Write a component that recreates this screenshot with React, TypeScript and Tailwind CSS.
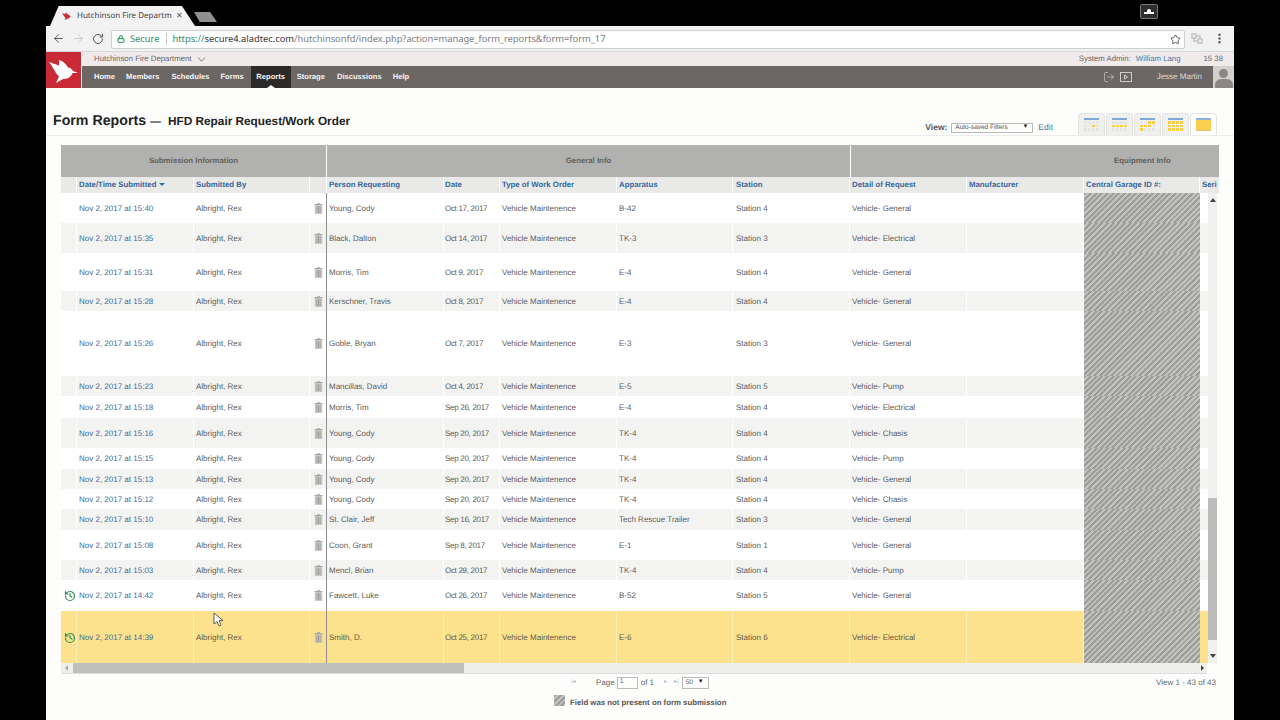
import { ArrowLeft, ArrowRight, RotateCw, Star, Lock, EllipsisVertical, History, ChevronDown, LogOut } from "lucide-react";

const W = ["w-[16px]","w-[117px]","w-[116px]","w-[17px]","w-[117px]","w-[56px]","w-[117px]","w-[116px]","w-[117px]","w-[117px]","w-[117px]","w-[116px]"];

const rows: [string,string,string,string,string,string,string,string][] = [
  ["h-[30px]","Nov 2, 2017 at 15:40","Young, Cody","Oct 17, 2017","B-42","Station 4","Vehicle- General",""],
  ["h-[30px]","Nov 2, 2017 at 15:35","Black, Dalton","Oct 14, 2017","TK-3","Station 3","Vehicle- Electrical",""],
  ["h-[38px]","Nov 2, 2017 at 15:31","Morris, Tim","Oct 9, 2017","E-4","Station 4","Vehicle- General",""],
  ["h-[20px]","Nov 2, 2017 at 15:28","Kerschner, Travis","Oct 8, 2017","E-4","Station 4","Vehicle- General",""],
  ["h-[65px]","Nov 2, 2017 at 15:26","Goble, Bryan","Oct 7, 2017","E-3","Station 3","Vehicle- General",""],
  ["h-[20px]","Nov 2, 2017 at 15:23","Mancillas, David","Oct 4, 2017","E-5","Station 5","Vehicle- Pump",""],
  ["h-[22px]","Nov 2, 2017 at 15:18","Morris, Tim","Sep 26, 2017","E-4","Station 4","Vehicle- Electrical",""],
  ["h-[30px]","Nov 2, 2017 at 15:16","Young, Cody","Sep 20, 2017","TK-4","Station 4","Vehicle- Chasis",""],
  ["h-[21px]","Nov 2, 2017 at 15:15","Young, Cody","Sep 20, 2017","TK-4","Station 4","Vehicle- Pump",""],
  ["h-[20px]","Nov 2, 2017 at 15:13","Young, Cody","Sep 20, 2017","TK-4","Station 4","Vehicle- General",""],
  ["h-[20px]","Nov 2, 2017 at 15:12","Young, Cody","Sep 20, 2017","TK-4","Station 4","Vehicle- Chasis",""],
  ["h-[21px]","Nov 2, 2017 at 15:10","St. Clair, Jeff","Sep 16, 2017","Tech Rescue Trailer","Station 3","Vehicle- General",""],
  ["h-[30px]","Nov 2, 2017 at 15:08","Coon, Grant","Sep 8, 2017","E-1","Station 1","Vehicle- General",""],
  ["h-[20px]","Nov 2, 2017 at 15:03","Mencl, Brian","Oct 29, 2017","TK-4","Station 4","Vehicle- Pump",""],
  ["h-[31px]","Nov 2, 2017 at 14:42","Fawcett, Luke","Oct 26, 2017","B-52","Station 5","Vehicle- General","h"],
  ["h-[52px]","Nov 2, 2017 at 14:39","Smith, D.","Oct 25, 2017","E-6","Station 6","Vehicle- Electrical","h"],
];

const hatch = "bg-[repeating-linear-gradient(135deg,#9d9e9c_0px,#9d9e9c_2px,#c2c3c1_2px,#c2c3c1_4px)]";
const birdPath = "M3 9 L13 12.5 C13.5 10 13 8 13 7 C17 8 20 11 22 14.5 C24 14.5 26 16 27 18 L32 20 L26.5 20 C25 25 20 26 17 26 L10 30 L13 23.5 C10 21 7 14 3 9Z";

function Trash() {
  return (
    <svg width="9" height="11" viewBox="0 0 9 11" fill="none">
      <path d="M0.5 1.5h8" stroke="#a8a8a6" strokeWidth="1" />
      <path d="M3 0.5h3" stroke="#a8a8a6" strokeWidth="0.8" />
      <path d="M1.2 2.4h6.6v8.2H1.2z" fill="#cfcfcd" stroke="#a8a8a6" strokeWidth="0.5" />
      <path d="M2.9 3.2v6.8M4.5 3.2v6.8M6.1 3.2v6.8" stroke="#8f8f8d" strokeWidth="0.8" />
    </svg>
  );
}

function Row({ r, i }: { r: (typeof rows)[number]; i: number }) {
  const yellow = i === rows.length - 1;
  const bg = yellow ? "bg-[#fde28e]" : i % 2 === 1 ? "bg-[#f3f3f2]" : "bg-white";
  const line = yellow ? "border-[#fdeeb8]" : "border-white";
  const txt = yellow ? "text-[#5d5a45]" : "text-[#5c5c5c]";
  const cell = `h-full shrink-0 flex items-center pl-[2px] pt-[1px] border-r ${line}`;
  return (
    <div className={`flex items-center ${r[0]} ${bg} ${txt}`}>
      <div className={`${cell} ${W[0]} !pl-[3px]`}>
        {r[7] === "h" && <History size={12} strokeWidth={2.4} className="text-[#2f8f55]" />}
      </div>
      <div className={`${cell} ${W[1]} text-[#3f6c98]`}>{r[1]}</div>
      <div className={`${cell} ${W[2]}`}>Albright, Rex</div>
      <div className={`h-full shrink-0 flex items-center pl-[4px] border-r border-[#8e8e8e] ${W[3]}`}><Trash /></div>
      <div className={`${cell} ${W[4]}`}>{r[2]}</div>
      <div className={`${cell} ${W[5]} !pl-[1px] tracking-[-0.3px]`}>{r[3]}</div>
      <div className={`${cell} ${W[6]}`}>Vehicle Maintenence</div>
      <div className={`${cell} ${W[7]}`}>{r[4]}</div>
      <div className={`${cell} ${W[8]} !pl-[3px]`}>{r[5]}</div>
      <div className={`${cell} ${W[9]}`}>{r[6]}</div>
      <div className={`${cell} ${W[10]}`}></div>
      <div className={`h-full shrink-0 ${W[11]} ${hatch}`}></div>
      <div className="h-full w-[8px] shrink-0"></div>
    </div>
  );
}

function TabIcon({ kind, active }: { kind: number; active?: boolean }) {
  const cells = [
    [0,0,0,0, 0,0,1,0, 0,0,0,0],
    [0,0,0,0, 1,1,1,1, 0,0,0,0],
    [0,0,1,1, 1,1,1,0, 1,0,0,0],
    [1,1,1,1, 1,1,1,1, 1,1,1,1],
  ][kind] || [];
  return (
    <div className={`h-[22px] w-[27px] flex items-center justify-center border border-b-0 rounded-t-[4px] border-[#e4e4e2] ${active ? "bg-white" : "bg-[#f0f0ee]"}`}>
      {active ? (
        <div className="w-[15px] h-[13px] flex flex-col">
          <div className="h-[2px] bg-[#8fb0d6]" />
          <div className="flex-1 bg-[#f8d24f]" />
          <div className="h-[1px] bg-[#d8c27a]" />
        </div>
      ) : (
        <div className="w-[15px] h-[13px] flex flex-col">
          <div className="h-[2px] bg-[#7ea8d6]" />
          <div className="grid grid-cols-4 gap-[1px] flex-1 pt-[1px]">
            {cells.map((c, i) => <div key={i} className={c ? "bg-[#f8cf45]" : "bg-[#e6e6e4]"} />)}
          </div>
        </div>
      )}
    </div>
  );
}

export default function App() {
  return (
    <div className="w-[1280px] h-[720px] bg-black overflow-hidden relative [text-rendering:geometricPrecision] font-['Liberation_Sans',Arial,sans-serif]">
      {/* tab strip */}
      <div className="h-[26px] pl-[50px] flex items-end relative">
        <div className="h-[20px] w-[145px] bg-[#f2f2f2] [clip-path:polygon(0_100%,6%_0,91%_0,100%_100%)] flex items-center pl-[11px] font-['Noto_Sans',sans-serif] text-[8px] text-[#444]">
          <svg width="12" height="12" viewBox="0 0 35 35" fill="#c62f3a" className="shrink-0"><path d={birdPath} /></svg>
          <span className="ml-[4px] w-[94px] whitespace-nowrap">Hutchinson Fire Departm</span>
          <span className="ml-[5px] text-[8px] text-[#555] leading-none">✕</span>
        </div>
        <div className="w-[23px] h-[10px] mb-[4px] -ml-[1px] bg-[#8f8f8f] [clip-path:polygon(0_0,70%_0,100%_100%,25%_100%)]"></div>
        <div className="absolute left-[1140px] top-[4px] w-[18px] h-[15px] rounded-[2px] bg-[#2e2e2e] border border-[#777] flex flex-col items-center justify-center">
          <div className="w-[4px] h-[3px] bg-white rounded-t-full"></div>
          <div className="w-[10px] h-[2px] bg-white"></div>
        </div>
      </div>

      {/* browser + page */}
      <div className="ml-[46px] w-[1188px] h-[694px] bg-[#fdfdfc] flex flex-col">
        <div className="h-[26px] bg-[#f2f2f2] flex items-center pl-[6px] border-b border-[#d8d8d8] shrink-0">
          <ArrowLeft size={13} strokeWidth={1.8} className="text-[#555]" />
          <ArrowRight size={13} strokeWidth={1.8} className="text-[#c8c8c8] ml-[7px]" />
          <RotateCw size={12} strokeWidth={2} className="text-[#555] ml-[7px]" />
          <div className="ml-[7px] mt-[1px] w-[1074px] h-[19px] bg-white border border-[#cfcfcf] rounded-[2px] flex items-center pl-[5px] font-['Noto_Sans',sans-serif] text-[9.3px] whitespace-nowrap">
            <Lock size={8} strokeWidth={3} className="text-[#1a8a50]" />
            <span className="ml-[5px] text-[#2f8a5c]">Secure</span>
            <span className="ml-[7px] mr-[5px] w-px h-[12px] bg-[#c8c8c8]"></span>
            <span className="text-[#2f8a5c]">https://</span>
            <span className="text-[#333]">secure4.aladtec.com</span>
            <span className="text-[#7c7c7c]">/hutchinsonfd/index.php?action=manage_form_reports&amp;form=form_17</span>
            <Star size={11} strokeWidth={1.8} className="text-[#444] ml-auto mr-[3px]" />
          </div>
          <svg className="ml-[6px]" width="12" height="11" viewBox="0 0 12 11" fill="none" stroke="#c4c4c4" strokeWidth="1.6">
            <path d="M1 1h4v4H1zM7 6h4v4H7zM5 3h4v3M7 8H3V5" />
          </svg>
          <EllipsisVertical size={13} strokeWidth={2.4} className="text-[#555] ml-[10px]" />
        </div>

        {/* app header */}
        <div className="flex h-[36px] shrink-0">
          <div className="w-[35px] h-full bg-[#c92a36] flex items-center justify-center mr-px">
            <svg width="35" height="35" viewBox="0 0 35 35" fill="white"><path d={birdPath} /></svg>
          </div>
          <div className="flex-1 flex flex-col">
            <div className="h-[14px] bg-[#f0eaeb] flex items-center pl-[12px] text-[7.8px] text-[#666]">
              <span>Hutchinson Fire Department</span>
              <ChevronDown size={13} strokeWidth={1.5} className="ml-[3px]" />
              <span className="ml-auto">System Admin:</span>
              <span className="ml-[5px] text-[#49779f]">William Lang</span>
              <span className="ml-[23px] mr-[11px]">15 38</span>
            </div>
            <div className="h-[22px] flex">
              <div className="flex-1 bg-[#6c6665] flex items-center pl-[12px] text-[7.6px] font-bold text-[#f5f5f5] relative">
                <span>Home</span>
                <span className="ml-[11px]">Members</span>
                <span className="ml-[12px]">Schedules</span>
                <span className="ml-[11px]">Forms</span>
                <span className="ml-[7px] bg-[#2c2a28] h-full w-[40px] flex items-center justify-center relative">Reports
                  <span className="absolute bottom-0 left-[16px] w-0 h-0 border-x-[4px] border-x-transparent border-b-[3px] border-b-white"></span>
                </span>
                <span className="ml-[6px]">Storage</span>
                <span className="ml-[12px]">Discussions</span>
                <span className="ml-[11px]">Help</span>
                <LogOut size={12} strokeWidth={1.2} className="ml-auto text-[#d8d8d8]" />
                <svg className="ml-[5px]" width="12" height="10" viewBox="0 0 12 10" fill="none" stroke="#d8d8d8" strokeWidth="0.9">
                  <rect x="0.5" y="0.5" width="11" height="9" />
                  <path d="M4.5 3v4l3-2z" />
                </svg>
                <span className="ml-[25px] mr-[11px] font-normal text-[8px] text-[#ddd]">Jesse Martin</span>
              </div>
              <div className="w-[21px] bg-[#d4d0cf] flex flex-col items-center justify-end overflow-hidden">
                <div className="w-[9px] h-[9px] rounded-full bg-[#8c8786] mb-[1px]"></div>
                <div className="w-[18px] h-[9px] rounded-t-[6px] bg-[#8c8786]"></div>
              </div>
            </div>
          </div>
        </div>

        {/* title */}
        <div className="h-[48px] flex items-end shrink-0 border-b border-[#ececec] pl-[7px] pr-[17px] relative">
          <div className="flex items-baseline self-start mt-[23px] text-[#222] font-bold whitespace-nowrap">
            <span className="text-[14.2px]">Form Reports</span>
            <span className="text-[11px] ml-[4px]">—</span>
            <span className="text-[11.8px] ml-[7px]">HFD Repair Request/Work Order</span>
          </div>
          <div className="ml-auto flex items-center mb-[1px] mr-[25px] text-[#555]">
            <span className="text-[8.5px] font-bold">View:</span>
            <div className="ml-[4px] w-[82px] h-[10px] border border-[#bbb] flex items-center pl-[3px] pr-[4px] text-[6.5px]">
              <span>Auto-saved Filters</span>
              <span className="ml-auto text-[#222] text-[6px]">▼</span>
            </div>
            <span className="ml-[5px] text-[8.5px] text-[#4b7aa6]">Edit</span>
          </div>
          <div className="flex gap-px">
            <TabIcon kind={0} /><TabIcon kind={1} /><TabIcon kind={2} /><TabIcon kind={3} /><TabIcon kind={4} active />
          </div>
        </div>

        {/* table */}
        <div className="ml-[15px] w-[1158px] mt-[9px] text-[8px] whitespace-nowrap relative">
          <div className="flex h-[32px] text-[7.8px] font-bold text-[#5f605d] gap-px">
            <div className="w-[265px] bg-[#b1b2af] flex items-center justify-center">Submission Information</div>
            <div className="w-[523px] bg-[#b1b2af] flex items-center justify-center">General Info</div>
            <div className="flex-1 bg-[#b1b2af] flex items-center pl-[263px]">Equipment Info</div>
          </div>
          <div className="flex h-[16px] pb-px bg-[#e9eae8] font-bold text-[#36679a] text-[7.8px]">
            <div className={`${W[0]} shrink-0 border-r border-white h-[16px]`}></div>
            <div className={`${W[1]} shrink-0 border-r border-white h-full pl-[2px] flex items-center`}>Date/Time Submitted<span className="ml-[3px] w-0 h-0 border-x-[3px] border-x-transparent border-t-[3px] border-t-[#36679a]"></span></div>
            <div className={`${W[2]} shrink-0 border-r border-white h-full pl-[2px] flex items-center`}>Submitted By</div>
            <div className={`${W[3]} shrink-0 border-r border-white h-[16px]`}></div>
            <div className={`${W[4]} shrink-0 border-r border-white h-full pl-[2px] flex items-center`}>Person Requesting</div>
            <div className={`${W[5]} shrink-0 border-r border-white h-full pl-[1px] flex items-center`}>Date</div>
            <div className={`${W[6]} shrink-0 border-r border-white h-full pl-[2px] flex items-center`}>Type of Work Order</div>
            <div className={`${W[7]} shrink-0 border-r border-white h-full pl-[2px] flex items-center`}>Apparatus</div>
            <div className={`${W[8]} shrink-0 border-r border-white h-full pl-[3px] flex items-center`}>Station</div>
            <div className={`${W[9]} shrink-0 border-r border-white h-full pl-[2px] flex items-center`}>Detail of Request</div>
            <div className={`${W[10]} shrink-0 border-r border-white h-full pl-[2px] flex items-center`}>Manufacturer</div>
            <div className={`${W[11]} shrink-0 border-r border-white h-full pl-[2px] flex items-center`}>Central Garage ID #:</div>
            <div className="w-[19px] pl-[2px] flex items-center overflow-hidden">Seri</div>
          </div>
          <div className="flex">
            <div className="w-[1147px] shrink-0">
              {rows.map((r, i) => <Row key={i} r={r} i={i} />)}
            </div>
            <div className="w-[9px] bg-[#f0f0ee] flex flex-col items-center justify-between">
              <div className="flex-1 w-full flex flex-col">
                <div className="h-[305px] flex justify-center pt-[5px]"><span className="w-0 h-0 border-x-[3px] border-x-transparent border-b-[4px] border-b-[#444]"></span></div>
                <div className="h-[142px] bg-[#bcbdbb]"></div>
                <div className="flex-1 flex justify-center items-end pb-[5px]"><span className="w-0 h-0 border-x-[3px] border-x-transparent border-t-[4px] border-t-[#444]"></span></div>
              </div>
            </div>
          </div>
          <div className="w-[1146px] h-[11px] bg-[#eeefed] flex items-center border-b border-[#ddd]">
            <span className="ml-[4px] w-0 h-0 border-y-[3px] border-y-transparent border-r-[3px] border-r-[#aaa]"></span>
            <div className="ml-[5px] w-[391px] h-full bg-[#bfc0be]"></div>
            <span className="ml-auto mr-[3px] w-0 h-0 border-y-[3px] border-y-transparent border-l-[3px] border-l-[#444]"></span>
          </div>
          {/* pager */}
          <div className="flex items-center h-[17px] text-[8px] text-[#666]">
            <span className="ml-[510px] w-[8px] text-[6px] text-[#a9bdd2]">|◂</span>
            <span className="ml-[17px]">Page</span>
            <div className="ml-[2px] w-[21px] h-[12px] border border-[#bbb] pl-[2px] text-[7px] flex items-center">1</div>
            <span className="ml-[3px]">of 1</span>
            <span className="ml-[10px] text-[6px] text-[#a9bdd2]">▸</span>
            <span className="ml-[7px] text-[6px] text-[#a9bdd2]">▸|</span>
            <div className="ml-[3px] w-[27px] h-[12px] border border-[#bbb] flex items-center pl-[3px] pr-[4px] text-[6.5px]"><span>50</span><span className="ml-auto text-[#222] text-[6px]">▼</span></div>
            <span className="ml-auto mr-[3px]">View 1 - 43 of 43</span>
          </div>
          <div className="flex items-center ml-[493px] mt-[5px] text-[7.8px] font-bold text-[#555]">
            <div className={`w-[11px] h-[11px] -mt-[3px] ${hatch}`}></div>
            <span className="ml-[5px] mt-[1px]">Field was not present on form submission</span>
          </div>
        </div>
      </div>

      {/* mouse cursor */}
      <svg className="absolute left-[213px] top-[612px]" width="11" height="15" viewBox="0 0 11 15">
        <path d="M1 1v11l3-2.5 2 4.5 2-1-2-4.4h4z" fill="#fff" stroke="#333" strokeWidth="0.8" />
      </svg>
    </div>
  );
}
